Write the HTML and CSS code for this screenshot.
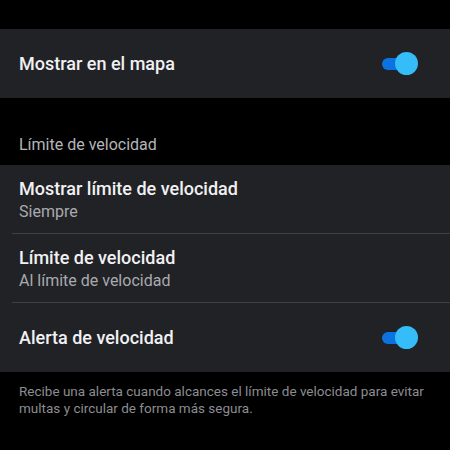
FILE: index.html
```html
<!DOCTYPE html>
<html lang="es">
<head>
<meta charset="utf-8">
<link rel="stylesheet" href="styles.css">
</head>
<body>
<div class="page">
  <div class="card">
    <div class="row">
      <div class="title">Mostrar en el mapa</div>
      <div class="toggle"><span class="track"></span><span class="thumb"></span></div>
    </div>
  </div>
  <div class="section-header">Límite de velocidad</div>
  <div class="card">
    <div class="row two-line divided">
      <div class="texts">
        <div class="title">Mostrar límite de velocidad</div>
        <div class="subtitle">Siempre</div>
      </div>
    </div>
    <div class="row two-line divided">
      <div class="texts">
        <div class="title">Límite de velocidad</div>
        <div class="subtitle">Al límite de velocidad</div>
      </div>
    </div>
    <div class="row">
      <div class="title">Alerta de velocidad</div>
      <div class="toggle"><span class="track"></span><span class="thumb"></span></div>
    </div>
  </div>
  <p class="footer">Recibe una alerta cuando alcances el límite de velocidad para evitar multas y circular de forma más segura.</p>
</div>
</body>
</html>
```
FILE: styles.css
```css
html, body {
  margin: 0;
  padding: 0;
  background: #000;
}
body {
  font-family: Roboto, "Noto Sans", sans-serif;
  width: 450px;
  height: 450px;
  overflow: hidden;
}
.page {
  padding-top: 29px;
}
.card {
  background: #212226;
}
.row {
  height: 69px;
  display: flex;
  align-items: center;
  justify-content: space-between;
  padding: 0 32px 0 19px;
  position: relative;
}
.row.divided::after {
  content: "";
  position: absolute;
  left: 12px;
  right: 0;
  bottom: 0;
  height: 1px;
  background: #3f4044;
}
.title {
  color: #f1f1f3;
  font-size: 18px;
  font-weight: 500;
  line-height: 22px;
}
.subtitle {
  color: #a9aaae;
  font-size: 16px;
  line-height: 20px;
  margin-top: 2px;
}
.two-line .texts {
  display: flex;
  flex-direction: column;
}
.section-header {
  height: 67px;
  box-sizing: border-box;
  padding: 0 19px 11px;
  display: flex;
  align-items: flex-end;
  color: #b4b5b9;
  font-size: 16px;
}
.toggle {
  position: relative;
  width: 36px;
  height: 23px;
}
.track {
  position: absolute;
  left: 0;
  top: 5.5px;
  width: 28px;
  height: 12px;
  border-radius: 6px;
  background: #0b72e0;
}
.thumb {
  position: absolute;
  right: 0;
  top: 0;
  width: 23px;
  height: 23px;
  border-radius: 50%;
  background: #34bdf8;
}
.footer {
  margin: 0;
  padding: 11px 19px 0;
  color: #8c8d91;
  font-size: 13.5px;
  line-height: 17px;
}
```
